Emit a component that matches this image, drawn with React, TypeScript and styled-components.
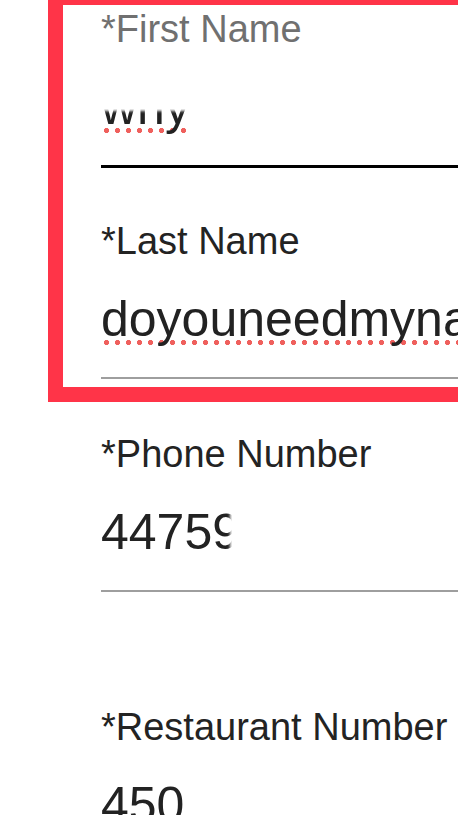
import React from "react";
import styled, { createGlobalStyle } from "styled-components";

const GlobalStyle = createGlobalStyle`
  html, body {
    margin: 0;
    padding: 0;
    background: #ffffff;
    overflow: hidden;
  }
  body {
    font-family: "Liberation Sans", Arial, sans-serif;
  }
`;

const Page = styled.div`
  width: 100vw;
  height: 100vh;
  overflow: hidden;
  padding-left: 48px;
  box-sizing: border-box;
`;

/* Red outline drawn around the name fields */
const Highlight = styled.section`
  margin-top: -10px;
  border: 15px solid #ff3448;
  border-right: none;
  padding: 2px 0 8px 38px;
  display: flex;
  flex-direction: column;
  gap: 51px;
`;

const Rest = styled.section`
  margin-top: 30px;
  padding-left: 53px;
  display: flex;
  flex-direction: column;
  gap: 113px;
`;

const Field = styled.div`
  display: flex;
  flex-direction: column;
`;

const Label = styled.label<{ $muted?: boolean }>`
  font-size: 38px;
  line-height: 44px;
  color: ${(p) => (p.$muted ? "#707070" : "#232323")};
  white-space: nowrap;
`;

const Value = styled.div`
  position: relative;
  margin-top: 26px;
  font-size: 50px;
  line-height: 60px;
  color: #222222;
  white-space: nowrap;
`;

/* Spell-check dotted marker under a word */
const Misspelled = styled.span`
  background-image: radial-gradient(circle, #ef605d 2.3px, transparent 2.9px);
  background-repeat: repeat-x;
  background-size: 11px 5px;
  background-position: 0 calc(100% - 2px);
`;

/* White brush mark hiding part of an entered value */
const Blot = styled.span<{ $left: number; $top: number; $w: number; $h: number }>`
  position: absolute;
  left: ${(p) => p.$left}px;
  top: ${(p) => p.$top}px;
  width: ${(p) => p.$w}px;
  height: ${(p) => p.$h}px;
  background: #ffffff;
  border-radius: 6px;
  box-shadow: 0 0 3px 2px #ffffff;
`;

const Underline = styled.div<{ $active?: boolean }>`
  margin-top: 28px;
  height: ${(p) => (p.$active ? 3 : 2)}px;
  background: ${(p) => (p.$active ? "#000000" : "#9e9e9e")};
`;

export default function App() {
  return (
    <>
      <GlobalStyle />
      <Page>
        <Highlight>
          <Field>
            <Label $muted>*First Name</Label>
            <Value>
              <Misspelled>why</Misspelled>
              <Blot $left={-4} $top={0} $w={112} $h={32} />
            </Value>
            <Underline $active />
          </Field>
          <Field>
            <Label>*Last Name</Label>
            <Value>
              <Misspelled>doyouneedmyname</Misspelled>
            </Value>
            <Underline />
          </Field>
        </Highlight>
        <Rest>
          <Field>
            <Label>*Phone Number</Label>
            <Value>
              4475906812
              <Blot $left={131} $top={4} $w={240} $h={58} />
            </Value>
            <Underline />
          </Field>
          <Field>
            <Label>*Restaurant Number</Label>
            <Value>450</Value>
            <Underline />
          </Field>
        </Rest>
      </Page>
    </>
  );
}
